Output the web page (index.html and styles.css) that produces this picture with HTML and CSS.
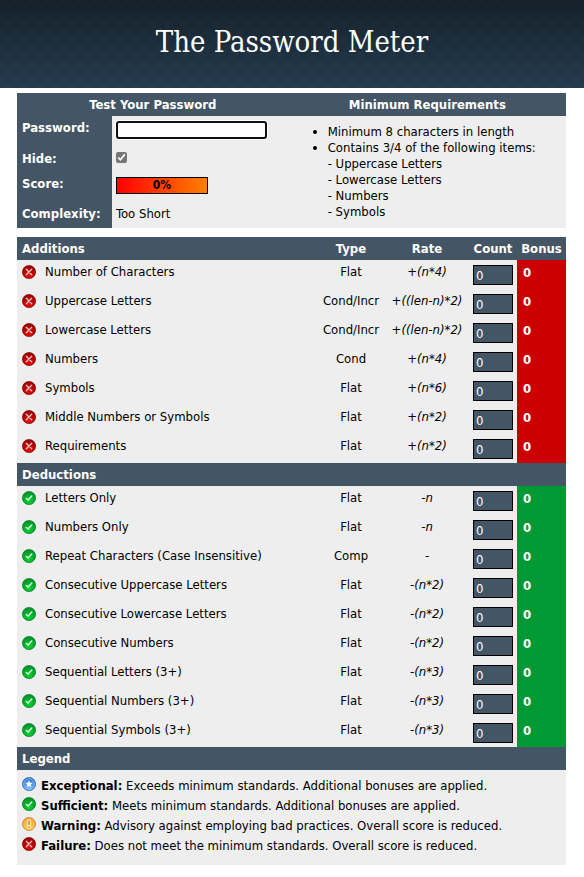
FILE: index.html
```html
<!DOCTYPE html>
<html lang="en">
<head>
    <meta charset="UTF-8">
    <meta name="viewport" content="width=device-width, initial-scale=1.0">
    <title>The Password Meter</title>
    <link rel="stylesheet" href="styles.css">
</head>
<body>
    <!-- Shared icons -->
    <svg class="icon-defs" width="0" height="0" aria-hidden="true">
        <defs>
            <radialGradient id="red" cx="50%" cy="75%" r="75%">
                <stop offset="0" stop-color="#e80c0c"/>
                <stop offset="1" stop-color="#8e0000"/>
            </radialGradient>
            <radialGradient id="green" cx="50%" cy="75%" r="75%">
                <stop offset="0" stop-color="#00d42c"/>
                <stop offset="1" stop-color="#078a2c"/>
            </radialGradient>
            <radialGradient id="blue" cx="50%" cy="80%" r="80%">
                <stop offset="0" stop-color="#7fc0ff"/>
                <stop offset="1" stop-color="#2268c4"/>
            </radialGradient>
            <radialGradient id="orange" cx="50%" cy="75%" r="75%">
                <stop offset="0" stop-color="#ffd950"/>
                <stop offset="1" stop-color="#f0a03c"/>
            </radialGradient>
            <symbol id="fail" viewBox="0 0 14 14">
                <circle cx="7" cy="7" r="6.6" fill="url(#red)" stroke="#8a0808" stroke-width=".7"/>
                <path d="M4.3 4.3l5.4 5.4M9.7 4.3l-5.4 5.4" stroke="#f0c8c8" stroke-width="1.3" stroke-linecap="round"/>
            </symbol>
            <symbol id="pass" viewBox="0 0 14 14">
                <circle cx="7" cy="7" r="6.6" fill="url(#green)" stroke="#0a7a2c" stroke-width=".7"/>
                <path d="M4.3 7.4l1.8 1.7 3.7-4" fill="none" stroke="#e6ffe6" stroke-width="1.4" stroke-linecap="round"/>
            </symbol>
            <symbol id="exceed" viewBox="0 0 14 14">
                <circle cx="7" cy="7" r="6.6" fill="url(#blue)" stroke="#2a66b4" stroke-width=".7"/>
                <circle cx="7" cy="7" r="5.3" fill="none" stroke="#a5d0fa" stroke-width=".6"/>
                <path d="M7 3l1 2.7 3 .1-2.3 1.8.8 2.8L7 8.8l-2.5 1.6.8-2.8L3 5.8l3-.1z" fill="#f2f8ff"/>
            </symbol>
            <symbol id="warn" viewBox="0 0 14 14">
                <circle cx="7" cy="7" r="6.5" fill="url(#orange)" stroke="#cf8436" stroke-width=".9"/>
                <path d="M7 3.6v4M7 10v.4" stroke="#fff4d0" stroke-width="3.4" stroke-linecap="round"/>
                <path d="M7 3.4v4.6M7 9.6v1.4" stroke="#c97a20" stroke-width="1.4"/>
            </symbol>
        </defs>
    </svg>

    <header class="header">
        <h1>The Password Meter</h1>
    </header>

    <main class="content">
        <form>
            <table class="test-table">
                <colgroup>
                    <col class="col-name">
                    <col class="col-field">
                    <col>
                </colgroup>
                <thead>
                    <tr>
                        <th colspan="2">Test Your Password</th>
                        <th>Minimum Requirements</th>
                    </tr>
                </thead>
                <tbody>
                    <tr class="row-password">
                        <th><label for="password">Password:</label></th>
                        <td><input type="password" id="password" class="password" autocomplete="off"></td>
                        <td rowspan="4" class="requirements">
                            <ul>
                                <li>Minimum 8 characters in length</li>
                                <li>Contains 3/4 of the following items:<br>
                                    - Uppercase Letters<br>
                                    - Lowercase Letters<br>
                                    - Numbers<br>
                                    - Symbols</li>
                            </ul>
                        </td>
                    </tr>
                    <tr class="row-hide">
                        <th><label for="hide">Hide:</label></th>
                        <td><input type="checkbox" id="hide" class="hide" checked></td>
                    </tr>
                    <tr class="row-score">
                        <th>Score:</th>
                        <td><div class="score">0%</div></td>
                    </tr>
                    <tr class="row-complexity">
                        <th>Complexity:</th>
                        <td>Too Short</td>
                    </tr>
                </tbody>
            </table>

            <table class="results-table">
                <colgroup>
                    <col>
                    <col class="col-type">
                    <col class="col-rate">
                    <col class="col-count">
                    <col class="col-bonus">
                </colgroup>
                <thead>
                    <tr>
                        <th class="left">Additions</th>
                        <th>Type</th>
                        <th>Rate</th>
                        <th>Count</th>
                        <th>Bonus</th>
                    </tr>
                </thead>
                <tbody class="additions">
                    <tr>
                        <td><div class="name"><svg class="icon"><use href="#fail"/></svg>Number of Characters</div></td>
                        <td class="type">Flat</td>
                        <td class="rate">+(n*4)</td>
                        <td class="count"><input type="text" value="0" aria-label="Number of Characters" readonly></td>
                        <td class="bonus">0</td>
                    </tr>
                    <tr>
                        <td><div class="name"><svg class="icon"><use href="#fail"/></svg>Uppercase Letters</div></td>
                        <td class="type">Cond/Incr</td>
                        <td class="rate">+((len-n)*2)</td>
                        <td class="count"><input type="text" value="0" aria-label="Uppercase Letters" readonly></td>
                        <td class="bonus">0</td>
                    </tr>
                    <tr>
                        <td><div class="name"><svg class="icon"><use href="#fail"/></svg>Lowercase Letters</div></td>
                        <td class="type">Cond/Incr</td>
                        <td class="rate">+((len-n)*2)</td>
                        <td class="count"><input type="text" value="0" aria-label="Lowercase Letters" readonly></td>
                        <td class="bonus">0</td>
                    </tr>
                    <tr>
                        <td><div class="name"><svg class="icon"><use href="#fail"/></svg>Numbers</div></td>
                        <td class="type">Cond</td>
                        <td class="rate">+(n*4)</td>
                        <td class="count"><input type="text" value="0" aria-label="Numbers" readonly></td>
                        <td class="bonus">0</td>
                    </tr>
                    <tr>
                        <td><div class="name"><svg class="icon"><use href="#fail"/></svg>Symbols</div></td>
                        <td class="type">Flat</td>
                        <td class="rate">+(n*6)</td>
                        <td class="count"><input type="text" value="0" aria-label="Symbols" readonly></td>
                        <td class="bonus">0</td>
                    </tr>
                    <tr>
                        <td><div class="name"><svg class="icon"><use href="#fail"/></svg>Middle Numbers or Symbols</div></td>
                        <td class="type">Flat</td>
                        <td class="rate">+(n*2)</td>
                        <td class="count"><input type="text" value="0" aria-label="Middle Numbers or Symbols" readonly></td>
                        <td class="bonus">0</td>
                    </tr>
                    <tr>
                        <td><div class="name"><svg class="icon"><use href="#fail"/></svg>Requirements</div></td>
                        <td class="type">Flat</td>
                        <td class="rate">+(n*2)</td>
                        <td class="count"><input type="text" value="0" aria-label="Requirements" readonly></td>
                        <td class="bonus">0</td>
                    </tr>
                </tbody>
                <tbody class="deductions">
                    <tr>
                        <th colspan="5" class="left">Deductions</th>
                    </tr>
                    <tr>
                        <td><div class="name"><svg class="icon"><use href="#pass"/></svg>Letters Only</div></td>
                        <td class="type">Flat</td>
                        <td class="rate">-n</td>
                        <td class="count"><input type="text" value="0" aria-label="Letters Only" readonly></td>
                        <td class="bonus">0</td>
                    </tr>
                    <tr>
                        <td><div class="name"><svg class="icon"><use href="#pass"/></svg>Numbers Only</div></td>
                        <td class="type">Flat</td>
                        <td class="rate">-n</td>
                        <td class="count"><input type="text" value="0" aria-label="Numbers Only" readonly></td>
                        <td class="bonus">0</td>
                    </tr>
                    <tr>
                        <td><div class="name"><svg class="icon"><use href="#pass"/></svg>Repeat Characters (Case Insensitive)</div></td>
                        <td class="type">Comp</td>
                        <td class="rate">-</td>
                        <td class="count"><input type="text" value="0" aria-label="Repeat Characters" readonly></td>
                        <td class="bonus">0</td>
                    </tr>
                    <tr>
                        <td><div class="name"><svg class="icon"><use href="#pass"/></svg>Consecutive Uppercase Letters</div></td>
                        <td class="type">Flat</td>
                        <td class="rate">-(n*2)</td>
                        <td class="count"><input type="text" value="0" aria-label="Consecutive Uppercase Letters" readonly></td>
                        <td class="bonus">0</td>
                    </tr>
                    <tr>
                        <td><div class="name"><svg class="icon"><use href="#pass"/></svg>Consecutive Lowercase Letters</div></td>
                        <td class="type">Flat</td>
                        <td class="rate">-(n*2)</td>
                        <td class="count"><input type="text" value="0" aria-label="Consecutive Lowercase Letters" readonly></td>
                        <td class="bonus">0</td>
                    </tr>
                    <tr>
                        <td><div class="name"><svg class="icon"><use href="#pass"/></svg>Consecutive Numbers</div></td>
                        <td class="type">Flat</td>
                        <td class="rate">-(n*2)</td>
                        <td class="count"><input type="text" value="0" aria-label="Consecutive Numbers" readonly></td>
                        <td class="bonus">0</td>
                    </tr>
                    <tr>
                        <td><div class="name"><svg class="icon"><use href="#pass"/></svg>Sequential Letters (3+)</div></td>
                        <td class="type">Flat</td>
                        <td class="rate">-(n*3)</td>
                        <td class="count"><input type="text" value="0" aria-label="Sequential Letters" readonly></td>
                        <td class="bonus">0</td>
                    </tr>
                    <tr>
                        <td><div class="name"><svg class="icon"><use href="#pass"/></svg>Sequential Numbers (3+)</div></td>
                        <td class="type">Flat</td>
                        <td class="rate">-(n*3)</td>
                        <td class="count"><input type="text" value="0" aria-label="Sequential Numbers" readonly></td>
                        <td class="bonus">0</td>
                    </tr>
                    <tr>
                        <td><div class="name"><svg class="icon"><use href="#pass"/></svg>Sequential Symbols (3+)</div></td>
                        <td class="type">Flat</td>
                        <td class="rate">-(n*3)</td>
                        <td class="count"><input type="text" value="0" aria-label="Sequential Symbols" readonly></td>
                        <td class="bonus">0</td>
                    </tr>
                </tbody>
                <tbody>
                    <tr>
                        <th colspan="5" class="left">Legend</th>
                    </tr>
                    <tr>
                        <td colspan="5" class="legend">
                            <ul>
                                <li><svg class="icon"><use href="#exceed"/></svg><span><strong>Exceptional:</strong> Exceeds minimum standards. Additional bonuses are applied.</span></li>
                                <li><svg class="icon"><use href="#pass"/></svg><span><strong>Sufficient:</strong> Meets minimum standards. Additional bonuses are applied.</span></li>
                                <li><svg class="icon"><use href="#warn"/></svg><span><strong>Warning:</strong> Advisory against employing bad practices. Overall score is reduced.</span></li>
                                <li><svg class="icon"><use href="#fail"/></svg><span><strong>Failure:</strong> Does not meet the minimum standards. Overall score is reduced.</span></li>
                            </ul>
                        </td>
                    </tr>
                </tbody>
            </table>
        </form>
    </main>
</body>
</html>
```
FILE: styles.css
```css
body {
    font-family: 'DejaVu Sans Condensed', Tahoma, sans-serif;
    font-size: 13px;
    line-height: 16px;
    margin: 0;
    background: #fff;
    color: #000;
}

.icon-defs {
    position: absolute;
}

/* Header */
.header {
    padding: 22px 0 26px;
    background:
        radial-gradient(circle, transparent 5px, rgba(0, 0, 0, 0.08) 6px, transparent 7px) 0 0 / 16px 16px,
        radial-gradient(circle, transparent 5px, rgba(0, 0, 0, 0.08) 6px, transparent 7px) 8px 8px / 16px 16px,
        linear-gradient(#16222c, #253d50);
    text-align: center;
}

.header h1 {
    margin: 0;
    font-family: 'DejaVu Serif Condensed', Georgia, serif;
    font-size: 29px;
    font-weight: 400;
    line-height: 40px;
    color: #fff;
}

.content {
    padding: 5px 18px 12px 17px;
}

table {
    width: 100%;
    table-layout: fixed;
    border-collapse: collapse;
    background: #eee;
}

th, td {
    padding: 4px 4px 3px 5px;
    vertical-align: top;
    text-align: left;
}

th {
    background: #456;
    color: #fff;
}

thead th {
    text-align: center;
}

th.left {
    text-align: left;
}

/* Password form */
.test-table {
    margin-bottom: 9px;
}

.col-name {
    width: 95px;
}

.col-field {
    width: 32%;
}

.test-table td {
    padding-left: 4px;
}

.row-password {
    height: 31px;
}

.row-hide {
    height: 25px;
}

.row-score {
    height: 30px;
}

.row-complexity {
    height: 26px;
}

.password {
    display: block;
    box-sizing: border-box;
    width: 151px;
    height: 18px;
    margin-top: 1px;
    padding: 1px 4px;
    border: 2px solid #101010;
    border-radius: 3px;
    background: #fff;
    box-shadow: 0 0 0 1px #fff;
    outline: none;
    font: inherit;
}

.hide {
    display: block;
    width: 11px;
    height: 11px;
    margin: 1px 0 0;
    accent-color: #767676;
}

.score {
    width: 90px;
    margin-top: 1px;
    border: 1px solid #000;
    background: linear-gradient(to right, #f00, #ff8000);
    font-size: 12px;
    font-weight: bold;
    line-height: 15px;
    text-align: center;
}

.test-table .requirements {
    padding: 8px 4px;
}

.requirements ul {
    margin: 0;
    padding-left: 36px;
}

/* Additions and deductions */
.col-type {
    width: 68px;
}

.col-rate {
    width: 84px;
}

.col-count {
    width: 48px;
}

.col-bonus {
    width: 49px;
}

.name {
    display: flex;
    gap: 9px;
}

.icon {
    flex: none;
    width: 14px;
    height: 14px;
    margin-top: 1px;
}

.results-table thead th {
    padding-left: 4px;
}

.results-table thead .left {
    padding-left: 5px;
}

.results-table .type,
.results-table .rate {
    padding-left: 0;
    padding-right: 0;
    text-align: center;
}

.rate {
    font-style: italic;
}

.results-table .count {
    padding: 5px 4px 4px;
}

.count input {
    display: block;
    box-sizing: border-box;
    width: 100%;
    height: 20px;
    padding: 0 2px;
    border: 1px solid #000;
    background: #456;
    color: #fff;
    font: inherit;
}

.results-table .bonus {
    padding-top: 5px;
    padding-left: 6px;
    color: #fff;
    font-weight: bold;
}

.additions .bonus {
    background: #c00;
}

.deductions .bonus {
    background: #093;
}

/* Legend */
.results-table .legend {
    padding: 6px 5px 9px;
}

.legend ul {
    margin: 0;
    padding: 0;
    list-style: none;
}

.legend li {
    display: flex;
    gap: 5px;
    line-height: 20px;
}
```
